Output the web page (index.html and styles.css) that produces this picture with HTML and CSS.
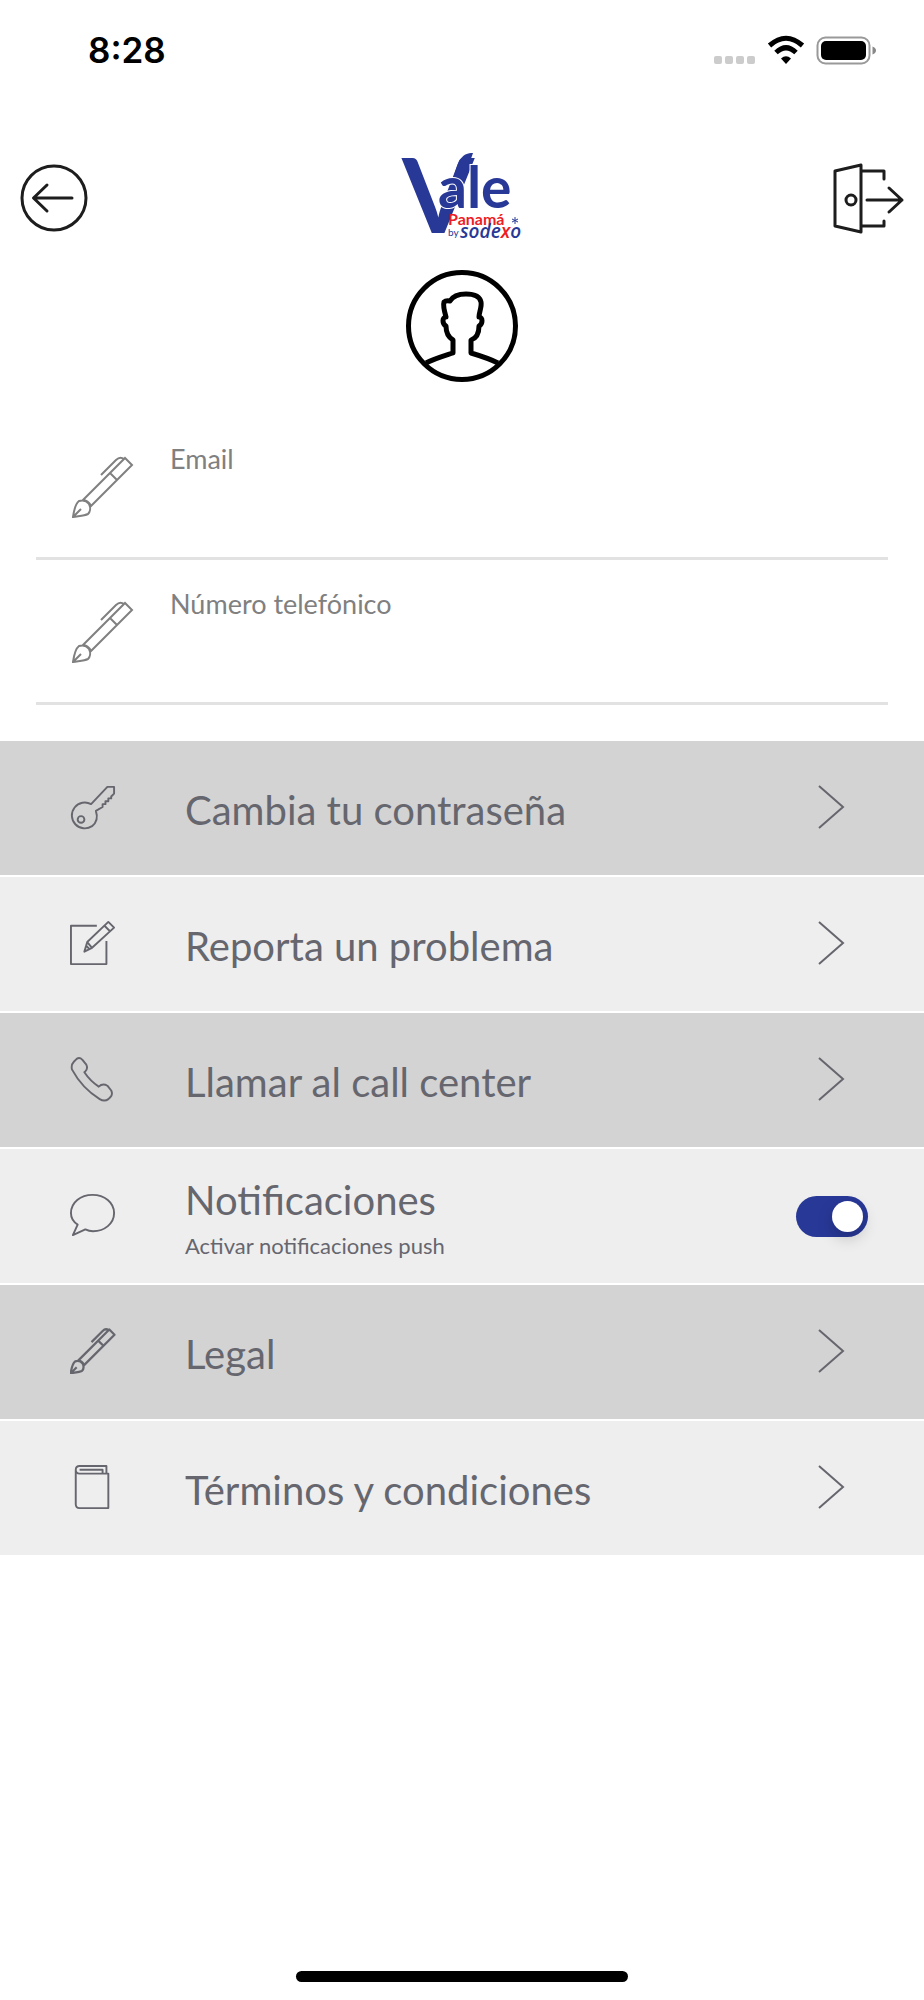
FILE: index.html
```html
<!DOCTYPE html>
<html lang="es">
<head>
<meta charset="utf-8">
<meta name="viewport" content="width=device-width, initial-scale=1">
<title>Vale Panamá – Perfil</title>
<link rel="stylesheet" href="styles.css">
</head>
<body>
<svg class="defs" aria-hidden="true">
  <symbol id="pen" viewBox="0 0 62 62">
    <path d="M1 61C2 54 3 48 7 45C10 44 14 44 17 48C19 52 18 56 16 58C12 60 6 60 1 61L9 53M11 44L53 2L60 9L19 50Q16 44 11 44ZM38 17L45 24M29 19L44 4Q48 0 52 3"/>
  </symbol>
  <symbol id="chevron" viewBox="0 0 28 46">
    <path d="M2 2L26 23L2 44"/>
  </symbol>
</svg>

<div class="status">
  <time class="clock">8:28</time>
  <svg class="signals" viewBox="0 0 170 40" aria-hidden="true">
    <g fill="#ccc"><rect x="4" y="26" width="8" height="8" rx="2"/><rect x="15" y="26" width="8" height="8" rx="2"/><rect x="26" y="26" width="8" height="8" rx="2"/><rect x="37" y="26" width="8" height="8" rx="2"/></g>
    <g fill="none" stroke="#000" stroke-width="5"><path d="M59.500 15.500Q76 1 92.500 15.500"/><path d="M66 22.500Q76 13 86 22.500"/></g>
    <path d="M71 28.500Q76 24 81 28.500L76 34Z"/>
    <rect x="107.500" y="7.500" width="52" height="26" rx="8" fill="none" stroke="#999" stroke-width="2"/>
    <rect x="111" y="11" width="45" height="19" rx="5"/>
    <path d="M162.500 16.500Q166 18 166 20.500T162.500 24.500Z" fill="#888"/>
  </svg>
</div>

<header class="header">
  <button class="nav" type="button" aria-label="Volver">
    <svg viewBox="0 0 70 70"><circle cx="34" cy="34" r="32"/><path d="M52 34H14M27 21L13.500 34L27 47"/></svg>
  </button>
  <svg class="logo" viewBox="0 0 124 94" role="img" aria-label="Vale Panamá by sodexo">
    <text class="logo-v" x="2" y="83">V</text>
    <path class="logo-blue" d="M54 26C58 10 62 3 73 3L65 26Z"/>
    <text class="logo-ale" x="38" y="58">ale</text>
    <text class="logo-panama" x="48" y="75">Panamá</text>
    <text class="logo-by" x="48" y="86">by</text>
    <text class="logo-sodexo" x="60" y="88">sode<tspan class="logo-red">x</tspan>o</text>
    <path class="logo-star" d="M115 67V74M112 69L118 72M112 72L118 69"/>
  </svg>
  <button class="nav" type="button" aria-label="Salir">
    <svg viewBox="0 0 70 70"><path d="M1 7L27 1V68L1 62ZM27 7H50V15M27 62H50V57M33 36H68M55 24L68 36L55 48"/><circle cx="17" cy="36" r="5"/></svg>
  </button>
</header>

<main>
  <svg class="avatar" viewBox="0 0 112 112" role="img" aria-label="Foto de perfil">
    <circle cx="56" cy="56" r="53.500"/>
    <path d="M20 93C28 89 38 86 47 83V70C42 67 40 63 40 56C36 54 36 47 40 47C38 40 37 35 38 32Q40 30 44 31C47 26 53 24 60 24C69 24 74 27 75 32C76 37 73 42 73 47C77 47 77 54 73 56C73 63 71 68 65 70V83C75 86 84 89 92 93"/>
  </svg>

  <form class="fields">
    <div class="field">
      <svg class="pen"><use href="#pen"/></svg>
      <div class="field-body"><label for="email">Email</label><input id="email" type="email"></div>
    </div>
    <div class="field">
      <svg class="pen"><use href="#pen"/></svg>
      <div class="field-body"><label for="phone">Número telefónico</label><input id="phone" type="tel"></div>
    </div>
  </form>

  <nav class="menu">
    <a class="row" href="#password">
      <svg class="icon" viewBox="0 0 48 48"><path d="M22 21L39 3H46V10L43 13V15H40V18H37V21H34V24L27 28C29 34 28 40 23 44A13.500 13.500 0 1 1 22 21Z"/><circle cx="11.500" cy="37" r="3.500"/></svg>
      <span class="title">Cambia tu contraseña</span>
      <svg class="chevron"><use href="#chevron"/></svg>
    </a>
    <a class="row" href="#report">
      <svg class="icon" viewBox="0 0 48 48"><path d="M28 6H1V46H38V22M15 33L18 23L40 2L46 8L23 29ZM18 23L23 29M36 6L42 12M17 27L20 30"/></svg>
      <span class="title">Reporta un problema</span>
      <svg class="chevron"><use href="#chevron"/></svg>
    </a>
    <a class="row" href="#call">
      <svg class="icon" viewBox="0 0 48 48"><path d="M4 6L7 3Q10 1 13 4L17 9Q19 13 16 16L15 17C19 23 24 28 30 32Q34 28 39 31L43 36Q45 40 42 43L40 45Q36 48 31 45C18 37 9 27 2 14Q1 9 4 6Z"/></svg>
      <span class="title">Llamar al call center</span>
      <svg class="chevron"><use href="#chevron"/></svg>
    </a>
    <div class="row">
      <svg class="icon" viewBox="0 0 48 48"><path d="M3 45L8 34C3 31 1 27 1 22C1 11 11 3 23.500 3S46 11 46 22S36 41 24 41Q20 41 16 39Z"/></svg>
      <label class="title" for="push">Notificaciones<small>Activar notificaciones push</small></label>
      <input class="switch" id="push" type="checkbox" role="switch" checked>
    </div>
    <a class="row" href="#legal">
      <svg class="icon icon-pen"><use href="#pen"/></svg>
      <span class="title">Legal</span>
      <svg class="chevron"><use href="#chevron"/></svg>
    </a>
    <a class="row" href="#terms">
      <svg class="icon" viewBox="0 0 48 48"><path d="M6 6V42Q6 46 10 46H40V10H10Q6 10 6 6Q6 2 10 2H38V10M10 6H34V10"/></svg>
      <span class="title">Términos y condiciones</span>
      <svg class="chevron"><use href="#chevron"/></svg>
    </a>
  </nav>
</main>

<div class="home-bar"></div>
</body>
</html>
```
FILE: styles.css
```css
* { box-sizing: border-box; }

body {
  margin: 0;
  min-height: 100vh;
  display: flex;
  flex-direction: column;
  background: #fff;
  color: #66666e;
  font-family: Lato, "Open Sans", sans-serif;
}

svg { display: block; flex: none; }

.defs { width: 0; height: 0; position: absolute; }

.status {
  display: flex;
  justify-content: space-between;
  align-items: center;
  padding: 30px 44px 0 88px;
}

.clock {
  font: 600 35px/40px Inter, sans-serif;
  color: #000;
}

.signals { width: 170px; height: 40px; }

.header {
  display: grid;
  grid-template-columns: 1fr auto 1fr;
  align-items: end;
  padding: 80px 20px 0;
}

.nav {
  width: 70px;
  height: 80px;
  padding: 0 0 10px;
  border: 0;
  background: none;
}

.nav:last-child { justify-self: end; }

.nav svg {
  width: 70px;
  height: 70px;
  overflow: visible;
  fill: none;
  stroke: #1d1d1d;
  stroke-width: 3;
  stroke-linecap: round;
  stroke-linejoin: round;
}

.logo { width: 124px; height: 94px; overflow: visible; }

.logo text { font-family: Lato, sans-serif; fill: #283897; }
.logo .logo-v { font-size: 104px; font-weight: 700; }
.logo .logo-ale {
  font-size: 57px;
  font-weight: 700;
  stroke: #fff;
  stroke-width: 2;
  paint-order: stroke;
}
.logo .logo-panama { font-size: 16px; font-weight: 700; fill: #ee1c25; }
.logo .logo-by { font-size: 10px; }
.logo .logo-sodexo { font-family: "Open Sans", sans-serif; font-size: 19px; font-weight: 600; font-style: italic; }
.logo .logo-red { fill: #ee1c25; }
.logo-blue { fill: #283897; }
.logo-star { stroke: #283897; stroke-width: 1; }

.avatar {
  width: 112px;
  height: 112px;
  margin: 26px auto 0;
  fill: none;
  stroke: #000;
  stroke-width: 5;
  stroke-linejoin: round;
}

.fields { padding: 33px 36px 0; }

.field {
  display: flex;
  height: 145px;
  gap: 36px;
  padding: 24px 0 0 36px;
  border-bottom: 3px solid #e2e2e2;
}

.pen {
  width: 62px;
  height: 62px;
  margin-top: 17px;
  overflow: visible;
  fill: none;
  stroke: #808080;
  stroke-width: 2;
}

.field-body {
  flex: 1;
  display: flex;
  flex-direction: column;
  color: #808080;
}

.field label { font-size: 27px; line-height: 40px; }

.field input {
  width: 100%;
  height: 50px;
  border: 0;
  padding: 0;
  outline: 0;
  background: none;
  font: inherit;
  font-size: 27px;
}

.menu {
  display: flex;
  flex-direction: column;
  gap: 2px;
  margin-top: 36px;
}

.row {
  display: flex;
  align-items: center;
  height: 134px;
  padding: 0 56px 3px 70px;
  background: #eee;
  color: inherit;
  text-decoration: none;
}

.row:nth-child(odd) { background: #d3d3d3; }

.icon {
  width: 46px;
  height: 46px;
  fill: none;
  stroke: #66666e;
  stroke-width: 2;
  stroke-linejoin: round;
}

.icon-pen { stroke-width: 3; }

.title {
  flex: 1;
  padding: 7px 0 0 69px;
  font-size: 40px;
  line-height: 56px;
}

.title small {
  display: block;
  font-size: 22px;
  line-height: 36px;
}

.chevron {
  width: 28px;
  height: 46px;
  margin-right: 23px;
  fill: none;
  stroke: #66666e;
  stroke-width: 2;
}

.switch {
  appearance: none;
  display: flex;
  width: 72px;
  height: 41px;
  margin: 3px 0 0;
  padding: 5px;
  justify-content: flex-end;
  border-radius: 21px;
  background: #283897;
}

.switch::before {
  content: "";
  width: 31px;
  height: 31px;
  border-radius: 50%;
  background: #fff;
  box-shadow: 0 6px 16px rgba(0, 0, 0, 0.2);
}

.switch:not(:checked) { justify-content: flex-start; background: #aaa; }

.home-bar {
  width: 36%;
  height: 11px;
  margin: auto auto 18px;
  border-radius: 6px;
  background: #000;
}
```
